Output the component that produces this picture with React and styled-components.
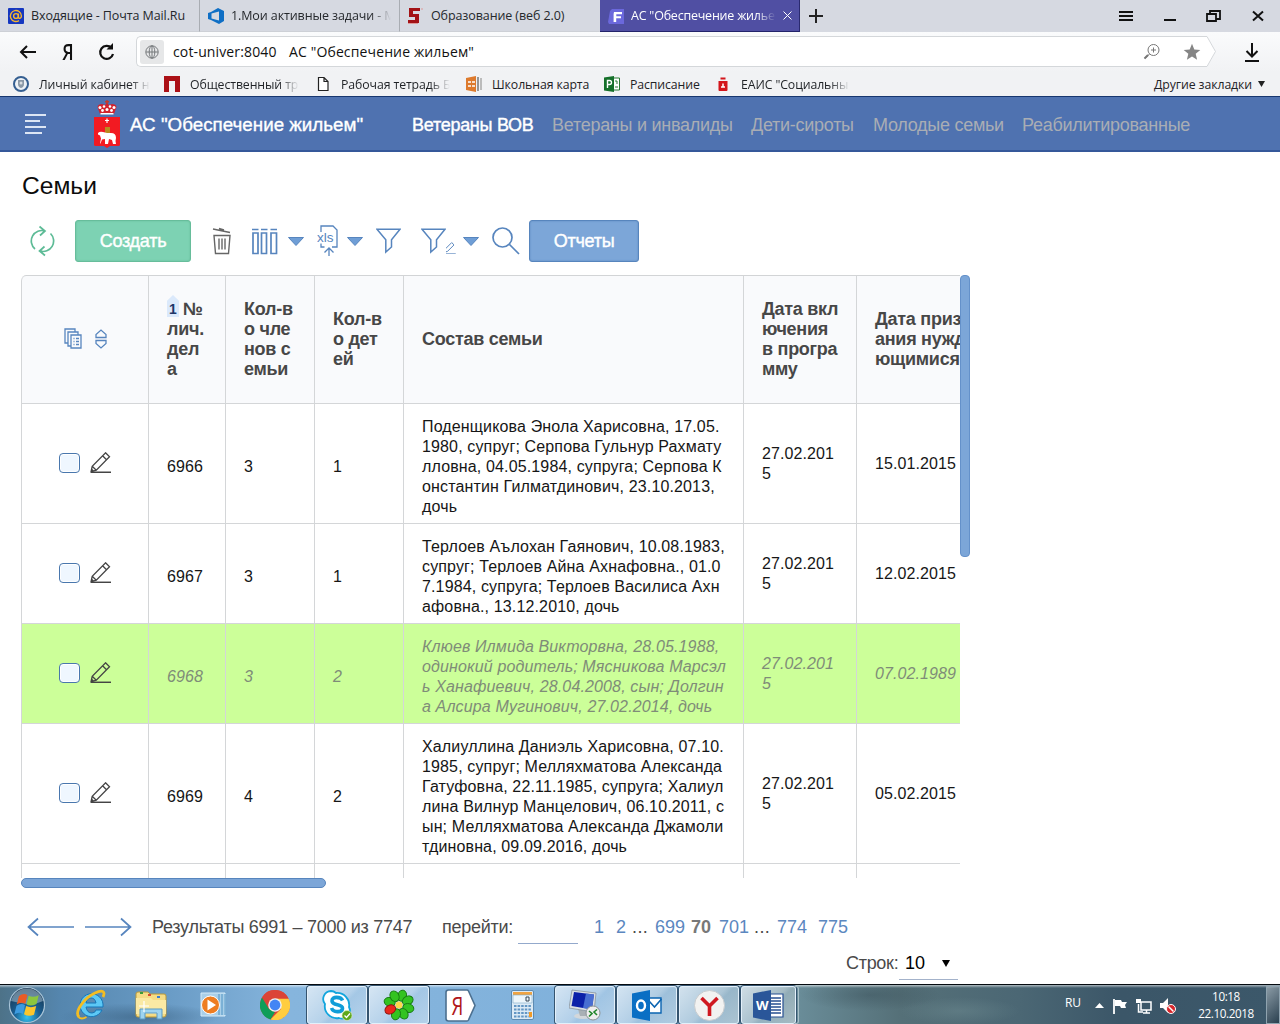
import React from 'react';
import styled, { createGlobalStyle, css } from 'styled-components';

const Global = createGlobalStyle`
  * { box-sizing: border-box; }
  html, body { margin: 0; padding: 0; background: #fff; overflow: hidden; }
  body { font-family: "Liberation Sans", Arial, sans-serif; }
  svg { display: block; flex: none; }
`;

const chromeFont = css`font-family: "Open Sans", "Noto Sans", sans-serif;`;

const Screen = styled.div`
  width: 1280px; height: 1024px; display: flex; flex-direction: column; overflow: hidden; background: #fff;
`;

/* ---------- browser chrome ---------- */
const TabStrip = styled.div`
  ${chromeFont}
  height: 32px; flex: none; display: flex; background: #d6d9e1; color: #1f2226;
`;
const Tab = styled.div`
  width: 200px; height: 32px; display: flex; align-items: center; padding: 0 10px 0 8px; gap: 7px;
  font-size: 12.5px; white-space: nowrap;
  letter-spacing: ${p => (p.$active ? -0.22 : -0.1)}px;
  font-weight: ${p => (p.$active ? 500 : 400)};
  background: ${p => (p.$active ? '#504fa3' : 'transparent')};
  color: ${p => (p.$active ? '#fff' : '#25282c')};
  border-right: 1px solid ${p => (p.$active ? '#2a2a70' : p.$last ? 'transparent' : '#a9adb3')};
  border-bottom: 1px solid ${p => (p.$active ? '#23236a' : '#cdd0d6')};
`;
const Clip = styled.span`
  width: ${p => p.$w}px; overflow: hidden; white-space: nowrap; flex: none;
  ${p => p.$fade && css`
    -webkit-mask-image: linear-gradient(90deg, #000 calc(100% - 20px), transparent);
    mask-image: linear-gradient(90deg, #000 calc(100% - 20px), transparent);
  `}
`;
const NewTab = styled.div`width: 32px; display: flex; align-items: center; justify-content: center;`;
const WindowButtons = styled.div`
  margin-left: auto; display: flex; align-items: center;
  > svg { width: 44px; height: 32px; }
`;
const NavBar = styled.div`
  ${chromeFont}
  height: 40px; flex: none; display: flex; align-items: center; padding-left: 18px;
  background: linear-gradient(#fafbfc, #f1f2f4); color: #111;
`;
const NavButtons = styled.div`display: flex; gap: 20px; width: 118px; align-items: center;`;
const Address = styled.div`
  display: flex; height: 31px; width: 1080px; margin-bottom: 1px;
`;
const AddressField = styled.div`
  flex: 1; display: flex; align-items: center; background: #fff; border: 1px solid #d4d7da; border-right: none;
  border-radius: 5px 0 0 5px; padding-left: 3px; font-size: 14px; letter-spacing: 0.13px;
`;
const SiteBadge = styled.div`
  width: 24px; height: 24px; border-radius: 3px; background: #e6e7e8; display: flex; align-items: center; justify-content: center;
  margin-right: 9px;
`;
const AddressHost = styled.span`width: 116px; white-space: nowrap;`;
const AddressTools = styled.div`margin-left: auto; display: flex; gap: 22px; padding-right: 1px; align-items: center;`;
const Download = styled.div`margin-left: auto; margin-right: 19px;`;

const Bookmarks = styled.div`
  ${chromeFont}
  height: 24px; flex: none; display: flex; align-items: center; padding-left: 13px; background: #f1f2f4;
  font-size: 12.3px; letter-spacing: -0.1px; color: #1f2226;
`;
const Bookmark = styled.div`
  width: ${p => p.$w}px; display: flex; gap: 10px; align-items: center; flex: none;
`;
const OtherBookmarks = styled.div`
  margin-left: auto; width: 126px; display: flex; justify-content: space-between; align-items: center;
  padding-right: 15px; white-space: nowrap;
`;

/* ---------- application header ---------- */
const AppBar = styled.header`
  height: 56px; flex: none; display: flex; align-items: center; background: #4f72b0; padding-left: 25px;
  border-top: 1px solid #17366f; border-bottom: 2px solid #35589a; font-size: 18px; letter-spacing: -0.27px;
`;
const Brand = styled.div`
  display: flex; align-items: center; gap: 10px; margin-left: 47px; width: 318px; color: #fff; white-space: nowrap;
  font-size: 18.8px; letter-spacing: 0; -webkit-text-stroke: 0.35px #fff;
  span { padding-top: 3px; }
`;
const NavLink = styled.a`
  color: ${p => (p.$active ? '#fff' : '#a9adb4')};
  width: ${p => p.$w}px; white-space: nowrap; padding-top: 3px;
  ${p => p.$active && css`-webkit-text-stroke: 0.4px #fff;`}
`;

/* ---------- content ---------- */
const Page = styled.main`height: 832px; flex: none; padding: 0 0 0 21px; background: #fff;`;
const Title = styled.h1`
  margin: 0; height: 68px; padding: 19px 0 0 1px; font-size: 24.6px; font-weight: 400; line-height: 30px; color: #0c0c0c;
`;
const Toolbar = styled.div`display: flex; height: 42px; align-items: center;`;
const Slot = styled.div`
  width: ${p => p.$w}px; height: 42px; display: flex; align-items: center; flex: none;
`;
const Button = styled.button`
  width: ${p => p.$w}px; height: 42px; border-radius: 3px; flex: none; padding: 0;
  font: 18px "Liberation Sans", Arial, sans-serif; color: #fff; letter-spacing: -0.25px;
  -webkit-text-stroke: 0.4px #fff;
  background: ${p => (p.$green ? '#7dd2b3' : '#7ca6d8')};
  border: 1px solid ${p => (p.$green ? '#67bd9b' : '#5785bd')};
  box-shadow: inset 0 0 2px ${p => (p.$green ? '#63b997' : '#5a87be')};
`;

const GridArea = styled.div`
  display: flex; margin-top: 13px; width: 949px; height: 603px;
`;
const GridView = styled.div`
  width: 939px; height: 603px; overflow: hidden; border-top-left-radius: 5px;
`;
const Track = styled.div`width: 10px;`;
const VThumb = styled.div`
  height: 282px; border-radius: 4px; background: #7ca6d8; border: 1px solid #6491ca;
`;
const HThumb = styled.div`
  width: 305px; height: 10px; border-radius: 5px; background: #7ca6d8; border: 1px solid #5785bd;
`;
const Row = styled.div`
  display: grid; grid-template-columns: 128px 77px 89px 89px 340px 113px 130px;
  height: ${p => p.$h}px; width: 966px;
  background: ${p => (p.$head ? '#f9fafc' : p.$marked ? '#ccff99' : '#fff')};
  color: ${p => (p.$marked ? '#7f8c78' : '#161616')};
  font-style: ${p => (p.$marked ? 'italic' : 'normal')};
  ${p => p.$head && css`
    border-top: 1px solid #d2d4d6; border-top-left-radius: 5px;
    color: #474747; font-weight: 700;
  `}
`;
const Cell = styled.div`
  display: flex; align-items: center; padding: ${p => (p.$low ? '6px 0 0' : p.$head ? '0 0 2px' : '0')} 18px;
  border-right: 1px solid #d4d6d8; border-bottom: 1px solid #d4d6d8;
  font-size: ${p => (p.$head ? 18 : 16)}px; line-height: 20px; white-space: pre;
  letter-spacing: ${p => (p.$head ? -0.27 : p.$wide ? 0.14 : 0.08)}px;
`;
const ControlCell = styled(Cell)`
  border-left: 1px solid #d4d6d8; padding: ${p => (p.$head ? '0 0 2px 42px' : '0 0 2px 37px')}; gap: ${p => (p.$head ? 13 : 10)}px;
  ${p => p.$head && css`border-top-left-radius: 5px;`}
`;
const Check = styled.span`
  width: 21px; height: 20px; border: 1px solid #4977ad; border-radius: 4px; background: #eff7ff; box-shadow: inset 0 0 0 1px #fff;
`;
const SortLine = styled.div`display: flex; align-items: center; gap: 4px; height: 20px;`;
const SortBadge = styled.span`
  width: 12px; height: 22px; margin-top: -5px; flex: none; text-align: center;
  background: #dbe9fb; clip-path: polygon(50% 0, 100% 26%, 100% 100%, 0 100%, 0 26%);
  font-size: 14px; line-height: 28px; color: #1e3668; letter-spacing: 0;
`;

const Pager = styled.div`
  display: flex; align-items: center; height: 34px; margin-top: 22px; font-size: 18px; color: #4a4a4a; padding-left: 6px;
  white-space: nowrap;
`;
const Arrows = styled.div`display: flex; gap: 9px; width: 125px;`;
const PagerText = styled.span`width: ${p => p.$w}px; letter-spacing: -0.27px;`;
const PageInput = styled.span`width: 60px; height: 34px; border-bottom: 1px solid #93a9cc; margin-right: 16px;`;
const PageLink = styled.a`
  width: ${p => p.$w}px; color: ${p => (p.$cur ? '#787878' : p.$dots ? '#4a4a4a' : '#5b87bf')};
  font-weight: ${p => (p.$cur ? 700 : 400)};
  letter-spacing: ${p => (p.$dots ? 0.4 : 0)}px;
`;
const RowsRow = styled.div`
  display: flex; margin-left: 825px; height: 36px; align-items: center; font-size: 18px; color: #4a4a4a;
  letter-spacing: -0.3px;
  > span { width: 53px; padding-top: 2px; }
`;
const Select = styled.div`
  width: 59px; height: 36px; display: flex; align-items: center; justify-content: space-between; padding: 3px 8px 0 6px;
  border-bottom: 1px solid #a3b2ca; color: #000; letter-spacing: 0;
`;

/* ---------- taskbar ---------- */
const Taskbar = styled.footer`
  ${chromeFont}
  height: 40px; flex: none; display: flex; padding-top: 1px; gap: 2px; border-top: 1px solid #050b10; color: #fff;
  background:
    linear-gradient(rgba(255,255,255,.55), rgba(255,255,255,0) 3px),
    radial-gradient(ellipse 80px 14px at 140px 32px, rgba(45,80,110,.5), transparent),
    radial-gradient(ellipse 70px 16px at 870px 10px, rgba(45,65,75,.35), transparent),
    radial-gradient(ellipse 60px 14px at 960px 26px, rgba(120,150,155,.35), transparent),
    linear-gradient(90deg, #4d7288 0, #5586ae 60px, #6a9cc6 170px, #86b5dd 290px, #80b1db 600px, #7ba8c9 690px, #698c98 800px, #557078 900px, #4b6774 1020px, #3b5668 1120px, #3c586a 1280px);
`;
const TaskSlot = styled.div`
  width: ${p => p.$w || 60}px; height: 38px; display: flex; align-items: center; justify-content: center; flex: none;
  padding: 0 ${p => p.$right || 0}px 0 ${p => p.$left || 0}px;
  ${p => p.$open && css`
    border: 1px solid #e3f0fa; border-radius: 3px; box-shadow: 0 0 0 1px #35546f;
    background: linear-gradient(135deg, rgba(255,255,255,.66), rgba(255,255,255,.4) 50%, rgba(255,255,255,.26) 58%, rgba(255,255,255,.4));
  `}
`;
const StackEdge = styled.div`
  width: 4px; height: 38px; margin-left: -3px; border: 1px solid #a9bfc9; border-left: none; border-radius: 0 3px 3px 0;
`;
const Tray = styled.div`margin-left: auto; display: flex; align-items: center; font-size: 11.5px;`;
const Lang = styled.span`width: 30px; margin-bottom: 5px; font-size: 12px; letter-spacing: -0.2px;`;
const TrayIcons = styled.div`display: flex; align-items: center; gap: 8px; width: 102px; padding-top: 1px;`;
const Clock = styled.div`
  width: 58px; text-align: center; line-height: 17px; white-space: nowrap; letter-spacing: -0.4px; font-size: 11.7px;
`;
const ShowDesktop = styled.div`
  width: 14px; height: 38px; margin-left: 11px; border: 1px solid #8fa3af;
  background: linear-gradient(135deg, rgba(255,255,255,.4), rgba(10,20,30,.35));
`;
const Ya = styled.span`
  font: 600 21px/26px "Open Sans", sans-serif; width: 18px; height: 26px; text-align: center; transform: scaleX(.84);
  margin: 0 0 0 1px;
`;

/* ---------- drawings ---------- */
const S = ({ w, h, vb, children, ...r }) => (
  <svg width={w} height={h} viewBox={vb || `0 0 ${w} ${h}`} fill="none" {...r}>{children}</svg>
);
const BLUE = '#5785be';

const MailIcon = () => <S w={16} h={16}><rect width="16" height="16" rx="1" fill="#1537c0" /><circle cx="8" cy="8" r="2.4" stroke="#f5b52e" strokeWidth="1.4" /><path d="M10.4 5.4v3.7c0 2 3 1.6 3-1.2A5.5 5.5 0 1 0 11 12.6" stroke="#f5b52e" strokeWidth="1.4" /></S>;
const VsIcon = () => <S w={16} h={16}><path fillRule="evenodd" d="M0 5l3-1 7-4 6 3v10l-5 3-8-4-3-1zM3.500 5.500v5L11 12.500V3.500z" fill="#0f6fc5" /></S>;
const FiveIcon = () => <S w={16} h={16}><path d="M1 0h11v3H5v3h6v9H0v-3h7V9H1z" fill="#a31216" /><path d="M13 1h2M0 15.500h10" stroke="#d99" /></S>;
const FIcon = () => <S w={16} h={16}><path d="M4 1h12v15H1L0 14 2 3z" fill="#6b68dc" /><path d="M6 4h8v2.2H8.3v2H13v2.1H8.2V14H5.6V6z" fill="#fff" /></S>;
const Globe = () => <S w={14} h={14}><g stroke="#75787b"><circle cx="7" cy="7" r="6.2" /><ellipse cx="7" cy="7" rx="2.8" ry="6.2" /><path d="M1 7h12M7 1v12" /></g></S>;
const Pencil = ({ w = 21, h = 21, c = '#444' }) => (
  <S w={w} h={h} vb="0 0 21 21"><g stroke={c} strokeWidth="1.3"><path d="M1 19.800 2.200 14.300 15.600.8l3.900 3.900L6.300 18.200zM2.200 14.300l4.100 3.900M12.600 3.800l3.900 3.900" /><path d="M1 20.300h20" strokeWidth="1.500" /></g><path d="m1 20 .8-3.400 2.400 2.400z" fill={c} /></S>
);
const Caret = () => <S w={16} h={9}><path d="M.5.5h15L8 8.5z" fill="#6f9ed6" stroke="#5785be" /></S>;
const Funnel = () => <S w={25} h={26}><path d="M1 1.2h23l-8.5 10.6v7.2L9.8 24V11.8z" stroke={BLUE} strokeWidth="1.5" /></S>;
const Crest = () => (
  <S w={26} h={48}>
    <path d="M6 14 3.500 7Q4 4 8 4l3 1 2-2.500L15 5l3-1q4 0 4.500 3L20 14z" fill="#d3232e" />
    <path d="M13 0v4M11 1.700h4" stroke="#c23a2e" strokeWidth="1.400" />
    <g fill="#fff"><circle cx="6" cy="7.500" r="1.500" /><circle cx="20" cy="7.500" r="1.500" /><circle cx="10" cy="6.500" r="1.300" /><circle cx="16" cy="6.500" r="1.300" /><circle cx="8.500" cy="10.500" r="1.400" /><circle cx="13" cy="9.500" r="1.500" /><circle cx="17.500" cy="10.500" r="1.400" /><path d="M6.500 13h13v1.500h-13z" /></g>
    <path d="M0 17h26v28q0 1-2 1h-8l-3 2-3-2H2q-2 0-2-1z" fill="#f21a22" />
    <path d="M13 18.500v4.500M11 20.500h4" stroke="#fff" strokeWidth="1.200" /><rect x="11" y="27" width="5" height="6" fill="#b98a20" />
    <path d="M4 33q2-2 5-1l4 1h4q5 0 5 5l-.5 3 .5 3h-3l-1-4-3-1-1 5h-3v-5l-3 .5-1.500 4H6l1-5-1-3-2-1z" fill="#fff" />
  </S>
);
const WinFlag = () => (
  <S w={38} h={38}>
    <defs><radialGradient id="orb" cx=".5" cy=".85" r=".8"><stop offset="0" stopColor="#35c3f0" /><stop offset=".45" stopColor="#1b6093" /><stop offset="1" stopColor="#16344f" /></radialGradient></defs>
    <circle cx="19" cy="19" r="17.500" fill="url(#orb)" stroke="#a9c5d8" strokeWidth="1.2" /><path d="M3 15a16.500 16.500 0 0 1 32 0q-8 4-16 3T3 15z" fill="#d6e6f0" opacity=".42" />
    <path d="M11 10q4.500-3.500 8.500-1l-2.200 8.800q-4.500-2.300-8.500.5z" fill="#ea5b25" /><path d="M20.700 9.700q4.500 2.300 10-.5l-2.200 8.800q-5.500 2.800-10 .5z" fill="#8cc63e" />
    <path d="M8.500 19.800q4.500-3 8.500-.7l-2.200 8.800q-4-2.300-8.500.5z" fill="#3d9be0" /><path d="M18.200 20q4.500 2.300 10 0L26 28.700q-5.500 2.300-10-.5z" fill="#fcc62c" />
  </S>
);
const IE = () => (
  <S w={32} h={32}>
    <path d="M27 21a11.500 11.500 0 1 1 1-6v3H11q1 6 6 6 3 0 4-3zM11 14h10q-1-5-5-5t-5 5z" fill="#5cc8f5" stroke="#1777b8" strokeWidth="1" fillRule="evenodd" />
    <path d="M4 28C-1 23 9 9 20 4c7-3.500 11-2 8 4" stroke="#f4bd22" strokeWidth="2.800" /><path d="M3.500 28q3 3 8 0" stroke="#f4bd22" strokeWidth="2" />
  </S>
);
const Explorer = () => (
  <S w={32} h={30}>
    <path d="M1 4q0-2 2-2h10l2 2h14q2 0 2 2v19q0 2-2 2H3q-2 0-2-2z" fill="#f5dc86" stroke="#b9983b" />
    <path d="M5 2h3v2H5z" fill="#3a9b3a" /><path d="M13 4h3v2h-3z" fill="#d84a34" /><path d="M22 6h3v2h-3z" fill="#3d7fd0" /><path d="M1 8h15l2 2h13v14H1z" fill="#fae9a4" />
    <path d="M5 29V19h22v10h-5v-6H10v6z" fill="#9ed4f0" stroke="#5b9ac4" /><path d="M9 11v11M4 16h10" stroke="#fff" strokeWidth="1.200" />
  </S>
);
const Wmp = () => <S w={28} h={28}><path d="M2 2h24v23H2z" fill="#a9cfe8" stroke="#d5ebf8" /><path d="M20 3v21M23 3v21M26 3v21" stroke="#4e93c4" /><circle cx="11.500" cy="14" r="9" fill="#ee7d21" stroke="#fff" strokeWidth="1" /><path d="M8.500 8.500 17 14l-8.500 5.500z" fill="#fff" /></S>;
const Chrome = () => (
  <S w={30} h={30}>
    <circle cx="15" cy="15" r="15" fill="#db4437" /><path d="M2 7.500 9 19l6 3-4.500 7.500A15 15 0 0 1 2 7.500z" fill="#0f9d58" />
    <path d="M15 8.500h13.500a15 15 0 0 1-18 20.900L21 19z" fill="#ffcd40" /><path d="M2 7.500A15 15 0 0 1 28.500 8.500H15L9 14z" fill="#db4437" /><circle cx="15" cy="15" r="6.800" fill="#f1f1f1" /><circle cx="15" cy="15" r="5.400" fill="#4285f4" />
  </S>
);
const Skype = () => (
  <S w={31} h={31}>
    <path d="M9 1a8 8 0 0 1 5 2 12 12 0 0 1 13 14 8 8 0 0 1-10 11A12 12 0 0 1 3 14 8 8 0 0 1 9 1z" fill="#fff" stroke="#12a5dd" strokeWidth="1.800" />
    <path d="M20.500 10.500C19 6.500 9.500 6 10 11c.4 5 11 2.500 10.500 7.500-.5 4.500-9.500 4-11-.5" stroke="#119dd8" strokeWidth="3.600" />
    <circle cx="25" cy="25.500" r="5" fill="#5fa81a" stroke="#ddeecb" strokeWidth=".6" /><path d="m22.500 25.500 2 2 3.500-4" stroke="#fff" strokeWidth="1.300" />
  </S>
);
const Icq = () => (
  <S w={32} h={32}>
    {[0, 45, 90, 135, 180, 270, 315, 225].map(a => (
      <ellipse key={a} cx="16" cy="6.200" rx="4.400" ry="5.600" transform={`rotate(${a + 18} 16 16)`} fill={a === 225 ? '#e8281c' : '#33c321'} stroke={a === 225 ? '#8b140d' : '#177a12'} strokeWidth=".9" />
    ))}
    <circle cx="16" cy="16" r="3.500" fill="#ffd94a" />
  </S>
);
const YaSign = () => (
  <S w={31} h={33}>
    <path d="M3.500 1h18.500q1 0 1.500 1l6.500 14.500L23.500 31q-.5 1-1.500 1H3.500Q1 32 1 29.500v-26Q1 1 3.500 1z" fill="#fff" stroke="#4c7090" strokeWidth="1.600" />
    <text transform="translate(6.500 25.500) scale(.72 1)" fontSize="26" fill="#b0161a" fontFamily="Open Sans, sans-serif">Я</text>
  </S>
);
const Calc = () => (
  <S w={23} h={30}><rect x=".5" y=".5" width="22" height="29" rx="1.500" fill="#dceaf5" stroke="#5e8bb2" /><path d="M2 2h19v3H2z" fill="#f0a443" /><path d="M2 5h19v8H2z" fill="#edf6fb" stroke="#7eabc9" strokeWidth=".6" /><path d="M15 7h3v4h-3z" stroke="#345" />
    {[16, 19.500, 23, 26.500].map(y => <path key={y} d={`M3 ${y}h17`} stroke="#6296c4" strokeWidth="2.200" strokeDasharray="2.500 1.100" />)}<path d="M18 22h3v5h-3z" fill="#f19a27" /></S>
);
const Rdp = () => (
  <S w={32} h={32}><ellipse cx="14" cy="27" rx="9" ry="3" fill="#d3d7da" /><path d="m9 20 8 2v5h-6z" fill="#a9b0b5" /><path d="m3 1 24 3-2 19L0 19z" fill="#dadfe3" stroke="#7e8a94" strokeWidth=".7" /><path d="m5 3 20 2.500-2 15L2.500 17z" fill="#0c20a8" /><path d="m17 4.500 8 1-2 15-9-1.500z" fill="#5c88e0" opacity=".75" />
    <circle cx="24" cy="24" r="7" fill="#eee" stroke="#8d9496" /><path d="m20 22 3 2.500-3 3M28 20.500l-3 2.500 3 3" stroke="#21862a" strokeWidth="1.600" /></S>
);
const Outlook = () => (
  <S w={31} h={31}><path d="M14 8h15v15H14z" fill="#fff" stroke="#0a64b1" strokeWidth="1.400" /><path d="m17 11 5.500 6 7-8" stroke="#0a64b1" strokeWidth="1.600" /><path d="M0 3.500 18 0v31L0 27.500z" fill="#0a6fc4" /><ellipse cx="9" cy="15.500" rx="4" ry="5" stroke="#fff" strokeWidth="2.400" /></S>
);
const Yandex = () => <S w={31} h={31}><circle cx="15.500" cy="15.500" r="15" fill="#f2f2f1" stroke="#c8cccf" /><path d="m7.500 8 8 8 8-8M15.500 15.500V26" stroke="#cf1820" strokeWidth="3.600" /></S>;
const Word = () => (
  <S w={31} h={31}><path d="M15 4h15v23H15z" fill="#fff" stroke="#274f91" strokeWidth="1.200" /><path d="M18 8h10M18 11h10M18 14h10M18 17h10M18 20h10M18 23h10" stroke="#274f91" strokeWidth="1.300" /><path d="M0 3.500 18 0v31L0 27.500z" fill="#2a5699" /><text x="3" y="20" fontSize="13" fontWeight="700" fontFamily="Noto Sans, sans-serif" fill="#fff">W</text></S>
);

const bookmarks = [
  { w: 151, cw: 111, fade: true, text: 'Личный кабинет н', icon: <S w={16} h={16}><circle cx="8" cy="8" r="7" stroke="#355f91" strokeWidth="2" fill="#eef2f6" /><path d="M5 4h6v4q0 3-3 4-3-1-3-4z" fill="#8b99a7" /><circle cx="8" cy="7" r="1.500" fill="#d9dde1" /></S> },
  { w: 151, cw: 109, fade: true, text: 'Общественный тр', icon: <S w={16} h={16}><path d="M0 0h16v16h-5V5H5v11H0z" fill="#ab1016" /></S> },
  { w: 151, cw: 109, fade: true, text: 'Рабочая тетрадь Б', icon: <S w={16} h={16}><path d="M3.500 1.500h5.500l4 4v9H3.500zM9 1.500v4h4" stroke="#222" strokeWidth="1.200" fill="#fff" /></S> },
  { w: 138, cw: 102, text: 'Школьная карта', icon: <S w={16} h={16}><path d="m0 2 10-2v16L0 14z" fill="#dd7a2d" /><path d="M2 6h3M6 6h3M2 10h3M6 10h3" stroke="#fff" strokeWidth="1.500" /><path d="M12 1v14" stroke="#777" strokeWidth="1.500" /><path d="M15 2v12" stroke="#aaa" strokeWidth="1.500" /></S> },
  { w: 111, cw: 80, text: 'Расписание', icon: <S w={16} h={16}><path d="M8 2h7.500v12H8z" fill="#fff" stroke="#2b7a35" /><path d="m0 1.500 10-1.500v16L0 14.500z" fill="#15702a" /><path d="M3.500 12V4.500h2q2 0 2 2t-2 2h-2" stroke="#fff" strokeWidth="1.400" /><path d="M11 5h2v3M11 11h3" stroke="#2b7a35" /></S> },
  { w: 150, cw: 109, fade: true, text: 'ЕАИС "Социальны', icon: <S w={16} h={16}><path d="M3.500 5h9v9q0 1-1 1h-7q-1 0-1-1zM5.500 1.500h5v2h-5z" fill="#d3151b" /><path d="M8 7.500v4M6 11h4" stroke="#fff" strokeWidth="1.500" /></S> },
];

const head = [
  'Кол-в\nо чле\nнов с\nемьи', 'Кол-в\nо дет\nей', 'Состав семьи',
  'Дата вкл\nючения\nв програ\nмму', 'Дата призн\nания нужда\nющимися',
];

const families = [
  { h: 120, id: '6966', n: 3, k: 1, d: '15.01.2015', f: 'Поденщикова Энола Харисовна, 17.05.\n1980, супруг; Серпова Гульнур Рахмату\nлловна, 04.05.1984, супруга; Серпова К\nонстантин Гилматдинович, 23.10.2013, \nдочь' },
  { h: 100, id: '6967', n: 3, k: 1, d: '12.02.2015', f: 'Терлоев Аълохан Гаянович, 10.08.1983,\nсупруг; Терлоев Айна Ахнафовна., 01.0\n7.1984, супруга; Терлоев Василиса Ахн\nафовна., 13.12.2010, дочь' },
  { h: 100, id: '6968', n: 3, k: 2, d: '07.02.1989', marked: true, f: 'Клюев Илмида Викторвна, 28.05.1988,\nодинокий родитель; Мясникова Марсэл\nь Ханафиевич, 28.04.2008, сын; Долгин\nа Алсира Мугинович, 27.02.2014, дочь' },
  { h: 140, id: '6969', n: 4, k: 2, d: '05.02.2015', f: 'Халиуллина Даниэль Харисовна, 07.10.\n1985, супруг; Мелляхматова Александа\nГатуфовна, 22.11.1985, супруга; Халиул\nлина Вилнур Манцелович, 06.10.2011, с\nын; Мелляхматова Александа Джамоли\nтдиновна, 09.09.2016, дочь' },
];

const FamilyRow = ({ r }) => (
  <Row $h={r.h} $marked={r.marked}>
    <ControlCell><Check /><Pencil /></ControlCell>
    <Cell $low>{r.id}</Cell>
    <Cell $low>{r.n}</Cell>
    <Cell $low>{r.k}</Cell>
    <Cell $low $wide>{r.f}</Cell>
    <Cell>{'27.02.201\n5'}</Cell>
    <Cell>{r.d}</Cell>
  </Row>
);

export default function App() {
  return (
    <Screen>
      <Global />
      <TabStrip>
        <Tab><MailIcon /><Clip $w={165}>Входящие - Почта Mail.Ru</Clip></Tab>
        <Tab><VsIcon /><Clip $w={160} $fade>1.Мои активные задачи - M</Clip></Tab>
        <Tab $last><FiveIcon /><Clip $w={160}>Образование (веб 2.0)</Clip></Tab>
        <Tab $active><FIcon /><Clip $w={145} $fade>АС "Обеспечение жилье</Clip><S w={9} h={9}><path d="m.5.5 8 8m0-8-8 8" stroke="#fff" /></S></Tab>
        <NewTab><S w={14} h={14}><path d="M7 0v14M0 7h14" stroke="#222" strokeWidth="2" /></S></NewTab>
        <WindowButtons>
          <S w={44} h={32}><path d="M15 12h14M15 16h14M15 20h14" stroke="#111" strokeWidth="2" /></S>
          <S w={44} h={32}><path d="M16 20h12" stroke="#111" strokeWidth="2" /></S>
          <S w={44} h={32}><path d="M15 14h9v7h-9zM18 13v-2h10v8h-4" stroke="#111" strokeWidth="1.800" /></S>
          <S w={44} h={32}><path d="m17 11.500 10 9m0-9-10 9" stroke="#111" strokeWidth="2" /></S>
        </WindowButtons>
      </TabStrip>
      <NavBar>
        <NavButtons>
          <S w={20} h={18}><path d="M18 9H3m6-6L3 9l6 6" stroke="#111" strokeWidth="2" /></S>
          <Ya>Я</Ya>
          <S w={18} h={18}><path d="M14.500 5A6.500 6.500 0 1 0 16 11" stroke="#111" strokeWidth="2.200" /><path d="M9.500 6.500H16V0z" fill="#111" /></S>
        </NavButtons>
        <Address>
          <AddressField>
            <SiteBadge><Globe /></SiteBadge>
            <AddressHost>cot-univer:8040</AddressHost>
            <span>АС "Обеспечение жильем"</span>
            <AddressTools>
              <S w={18} h={18}><g stroke="#777"><circle cx="10.500" cy="7" r="5.500" /><path d="M8 7h5M10.500 4.500v5M6.500 11 2 15.500" /></g><path d="m5 12-3.500 3.500" stroke="#777" strokeWidth="2" /></S>
              <S w={18} h={18}><path d="m9 .8 2.300 5.600 6 .5-4.600 3.900 1.400 5.900L9 13.500l-5.100 3.200 1.400-5.900L.7 6.900l6-.5z" fill="#858585" /></S>
            </AddressTools>
          </AddressField>
          <S w={14} h={31}><path d="M0 0h5l9 15.500L5 31H0z" fill="#fff" /><path d="M0 .5h5l8.500 15L5 30.500H0" stroke="#d4d7da" /></S>
        </Address>
        <Download><S w={18} h={20}><path d="M9 1v13M3.500 9 9 14.500 14.500 9M2 19h14" stroke="#111" strokeWidth="2" /></S></Download>
      </NavBar>
      <Bookmarks>
        {bookmarks.map(b => <Bookmark key={b.text} $w={b.w}>{b.icon}<Clip $w={b.cw} $fade={b.fade}>{b.text}</Clip></Bookmark>)}
        <OtherBookmarks><span>Другие закладки</span><S w={7} h={6}><path d="M0 0h7L3.500 6z" fill="#222" /></S></OtherBookmarks>
      </Bookmarks>

      <AppBar>
        <S w={22} h={20}><path d="M0 1h21M0 7h15M0 13h21M0 19h17" stroke="#dde6f4" strokeWidth="1.800" /></S>
        <Brand><Crest /><span>АС "Обеспечение жильем"</span></Brand>
        <NavLink $w={140} $active>Ветераны ВОВ</NavLink>
        <NavLink $w={199}>Ветераны и инвалиды</NavLink>
        <NavLink $w={122}>Дети-сироты</NavLink>
        <NavLink $w={149}>Молодые семьи</NavLink>
        <NavLink $w={180}>Реабилитированные</NavLink>
      </AppBar>

      <Page>
        <Title>Семьи</Title>
        <Toolbar>
          <Slot $w={54}>
            <S w={44} h={42}><g stroke="#5dbb96" strokeWidth="1.700"><path d="M14 29A10.500 10.500 0 0 1 24 11M18.500 6.500l5.500 4.500-5 4.500M29.500 13.500A10.500 10.500 0 0 1 19 31M24 35.500 18.500 31l5-4.500" /></g></S>
          </Slot>
          <Button $green $w={116}>Создать</Button>
          <Slot $w={42}>
            <S w={42} h={42}><g stroke="#666" strokeWidth="1.400"><path d="m22 9 17 3.500M28 8.500l5 1.500M23 15.500h16l-1.500 18h-13zM28 18.500v11M31 18.500v11M34 18.500v11" /></g></S>
          </Slot>
          <Slot $w={55}><S w={55} h={42}><g stroke={BLUE} strokeWidth="1.700"><path d="M19 9.500h6.500M28 9.500h6.500M37.500 9.500H44M20 13h5v20.500h-5zM28.500 13h5v20.500h-5zM38 13h5.500v20.500H38z" /></g></S></Slot>
          <Slot $w={29}><Caret /></Slot>
          <Slot $w={30}>
            <S w={24} h={36}><g stroke={BLUE} strokeWidth="1.300"><path d="M4 9V3h12l4 4v17h-5M4 20.500V24h3.500M12 33V25M7.500 29.500 12 25l4.500 4.500" /></g><text x="0" y="19" fontSize="13.500" fill={BLUE} fontFamily="Liberation Sans, sans-serif">xls</text></S>
          </Slot>
          <Slot $w={29}><Caret /></Slot>
          <Slot $w={45}><Funnel /></Slot>
          <Slot $w={42}><Funnel /><S w={11} h={25}><g transform="translate(-3 13) scale(.58)" stroke={BLUE} strokeWidth="1.700"><path d="m2 18 2-6L15 1l4 4L8 16zM2 20.500h20" /></g></S></Slot>
          <Slot $w={29}><Caret /></Slot>
          <Slot $w={37}><S w={28} h={28}><g stroke={BLUE} strokeWidth="1.700"><circle cx="10.500" cy="10.500" r="9.500" /><path d="m17.500 17.500 9.500 9.500" /></g></S></Slot>
          <Button $w={110}>Отчеты</Button>
        </Toolbar>

        <GridArea>
          <GridView>
            <Row $head $h={129}>
              <ControlCell $head>
                <S w={18} h={21}><g stroke={BLUE} strokeWidth="1.300"><path d="M4 15H1V1h10v3M7 18H4V4h10v3" /><path d="M7 7h10v13H7zM9.500 10.500h1M12 10.500h3M9.500 13.500h1M12 13.500h3M9.500 16.500h1M12 16.500h3" /></g></S>
                <S w={12} h={20}><g stroke={BLUE} strokeWidth="1.300"><path d="M1 8.500V5.500l5-4.500 5 4.500v3zM1 11.500v3L6 19l5-4.500v-3z" /></g></S>
              </ControlCell>
              <Cell $head><div><SortLine><SortBadge>1</SortBadge>№</SortLine>{'лич.\nдел\nа'}</div></Cell>
              {head.map(t => <Cell key={t} $head>{t}</Cell>)}
            </Row>
            {families.map(r => <FamilyRow key={r.id} r={r} />)}
            <Row $h={60}>{[0, 1, 2, 3, 4, 5, 6].map(i => (i === 0 ? <ControlCell key={i} /> : <Cell key={i} />))}</Row>
          </GridView>
          <Track><VThumb /></Track>
        </GridArea>
        <HThumb />

        <Pager>
          <Arrows>
            <S w={48} h={20}><path d="M47 10H2m9-8.500L1.500 10l9.500 8.500" stroke={BLUE} strokeWidth="1.700" /></S>
            <S w={48} h={20}><path d="M1 10h45m-9-8.500 9.500 8.500L37 18.500" stroke={BLUE} strokeWidth="1.700" /></S>
          </Arrows>
          <PagerText $w={290}>Результаты 6991 – 7000 из 7747</PagerText>
          <PagerText $w={76}>перейти:</PagerText>
          <PageInput />
          <PageLink $w={22}>1</PageLink>
          <PageLink $w={16}>2</PageLink>
          <PageLink $w={23} $dots>...</PageLink>
          <PageLink $w={36}>699</PageLink>
          <PageLink $w={28} $cur>70</PageLink>
          <PageLink $w={35}>701</PageLink>
          <PageLink $w={23} $dots>...</PageLink>
          <PageLink $w={41}>774</PageLink>
          <PageLink $w={32}>775</PageLink>
        </Pager>
        <RowsRow><span>Строк:</span><Select>10<S w={8} h={7}><path d="M0 0h8L4 7z" fill="#000" /></S></Select></RowsRow>
      </Page>

      <Taskbar>
        <TaskSlot $w={57} $right={4}><WinFlag /></TaskSlot>
        <TaskSlot $left={3}><IE /></TaskSlot>
        <TaskSlot><Explorer /></TaskSlot>
        <TaskSlot $right={1}><Wmp /></TaskSlot>
        <TaskSlot><Chrome /></TaskSlot>
        <TaskSlot $open><Skype /></TaskSlot>
        <TaskSlot $open><Icq /></TaskSlot>
        <TaskSlot $right={2}><YaSign /></TaskSlot>
        <TaskSlot $right={2}><Calc /></TaskSlot>
        <TaskSlot $open><Rdp /></TaskSlot>
        <TaskSlot $open><Outlook /></TaskSlot>
        <TaskSlot $open><Yandex /></TaskSlot>
        <TaskSlot $open $w={55}><Word /></TaskSlot>
        <StackEdge />
        <Tray>
          <Lang>RU</Lang>
          <TrayIcons>
            <S w={9} h={5}><path d="M0 5 4.500 0 9 5z" fill="#fff" /></S>
            <S w={16} h={16}><path d="M2 1v15" stroke="#fff" strokeWidth="1.800" /><path d="M3 2h6l1 2h5l-2 3 1 3H9L8 8H3z" fill="#fff" /></S>
            <S w={16} h={16}><path d="M5 4h10v8H5zM7 15h7M10.500 12v3M2.500 6v8H7" stroke="#fff" strokeWidth="1.500" /><path d="M0 1h5v4H0z" fill="#fff" /></S>
            <S w={16} h={16}><path d="M0 5h3l5-5v15L3 10H0z" fill="#fff" /><circle cx="11" cy="11" r="4.500" fill="#d9262b" stroke="#fff" /><path d="m8.500 8.500 5 5" stroke="#fff" strokeWidth="1.500" /></S>
          </TrayIcons>
          <Clock>10:18<br />22.10.2018</Clock>
          <ShowDesktop />
        </Tray>
      </Taskbar>
    </Screen>
  );
}
